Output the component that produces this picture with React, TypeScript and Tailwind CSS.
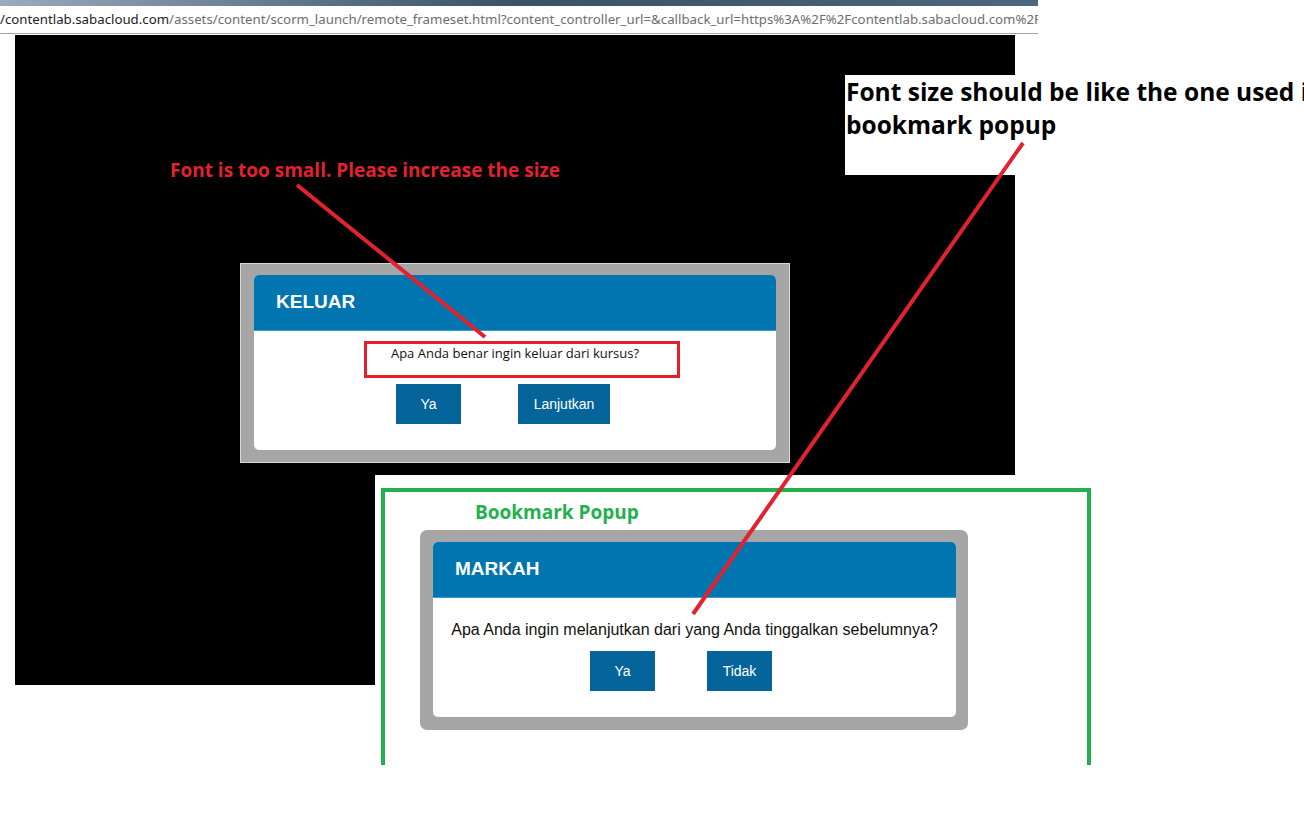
import React from "react";

const arial = "font-['Liberation_Sans',Arial,sans-serif]";
const note = "font-['Open_Sans','Noto_Sans',sans-serif] font-bold";

function DialogButton({ label, width }: { label: string; width: string }) {
  return (
    <button
      className={`${arial} ${width} h-[40px] bg-[#05659b] text-white text-[14px] flex items-center justify-center`}
    >
      {label}
    </button>
  );
}

function DialogHeader({ title }: { title: string }) {
  return (
    <div className="h-[56px] bg-[#0075b0] rounded-t-[5px] border-b border-[#3f98cc] flex items-center pl-[22px]">
      <h2 className={`${arial} text-white font-bold text-[19px]`}>{title}</h2>
    </div>
  );
}

function ExitDialog() {
  return (
    <div className="w-[550px] h-[200px] bg-[#a6a6a6] border border-[#d9d9d9] pt-[11px] pl-[13px]">
      <div className="relative w-[522px] h-[175px] bg-white rounded-[5px]">
        <DialogHeader title="KELUAR" />
        <p className="font-['Open_Sans','Noto_Sans',sans-serif] text-[13px] text-[#111] text-center pt-[14px] leading-[17px]">
          Apa Anda benar ingin keluar dari kursus?
        </p>
        <div className="flex justify-center gap-[57px] pt-[22px] pr-[24px]">
          <DialogButton label="Ya" width="w-[65px]" />
          <DialogButton label="Lanjutkan" width="w-[92px]" />
        </div>
        <div className="absolute left-[110px] top-[66px] w-[316px] h-[37px] border-[3px] border-[#e41f2b]" />
      </div>
    </div>
  );
}

function BookmarkDialog() {
  return (
    <div className="w-[548px] h-[200px] bg-[#a6a6a6] rounded-[7px] pt-[12px] pl-[13px]">
      <div className="w-[523px] h-[175px] bg-white rounded-[5px]">
        <DialogHeader title="MARKAH" />
        <p className={`${arial} text-[16px] text-[#111] text-center pt-[23px] leading-[18px]`}>
          Apa Anda ingin melanjutkan dari yang Anda tinggalkan sebelumnya?
        </p>
        <div className="flex justify-center gap-[52px] pt-[12px] pr-[27px]">
          <DialogButton label="Ya" width="w-[65px]" />
          <DialogButton label="Tidak" width="w-[65px]" />
        </div>
      </div>
    </div>
  );
}

export default function App() {
  return (
    <div className="relative w-[1304px] h-[840px] bg-white overflow-hidden">
      <div className="w-[1038px] h-[6px] bg-gradient-to-r from-[#9aabbd] via-[#3b5166] to-[#4c6780]" />
      <div className="w-[1038px] h-[28px] border-b border-[#a3a3a3] flex items-center overflow-hidden whitespace-nowrap font-['Noto_Sans',sans-serif] text-[13.25px]">
        <span className="text-[#1c1c1c]">/contentlab.sabacloud.com</span>
        <span className="text-[#6e6e6e]">
          /assets/content/scorm_launch/remote_frameset.html?content_controller_url=&amp;callback_url=https%3A%2F%2Fcontentlab.sabacloud.com%2FS
        </span>
      </div>

      <div className="ml-[15px] mt-[1px]">
        <div className="relative w-[1000px] h-[440px] bg-black pl-[225px] pt-[228px]">
          <ExitDialog />
          <p className={`${note} absolute left-[155px] top-[121px] text-[19px] text-[#e2222f] whitespace-nowrap`}>
            Font is too small. Please increase the size
          </p>
          <div className="absolute left-[830px] top-[40px] w-[170px] h-[100px] bg-white">
            <p className={`${note} pl-[1px] text-[24.5px] leading-[33px] text-black whitespace-nowrap`}>
              Font size should be like the one used in
              <br />
              bookmark popup
            </p>
          </div>
        </div>

        <div className="flex items-start">
          <div className="w-[360px] h-[210px] bg-black" />
          <div className="ml-[6px] mt-[13px] w-[710px] h-[277px] border-[4px] border-b-0 border-[#22b14c]">
            <p className={`${note} pl-[90px] pt-[8px] text-[19px] leading-[24px] text-[#22b14c]`}>
              Bookmark Popup
            </p>
            <div className="pl-[35px] pt-[6px]">
              <BookmarkDialog />
            </div>
          </div>
        </div>
      </div>

      <svg className="absolute inset-0 pointer-events-none" width="1304" height="840">
        <line x1="297" y1="185" x2="485" y2="337" stroke="#e2222f" strokeWidth="4" />
        <line x1="1023" y1="143" x2="693" y2="614" stroke="#e2222f" strokeWidth="4" />
      </svg>
    </div>
  );
}
